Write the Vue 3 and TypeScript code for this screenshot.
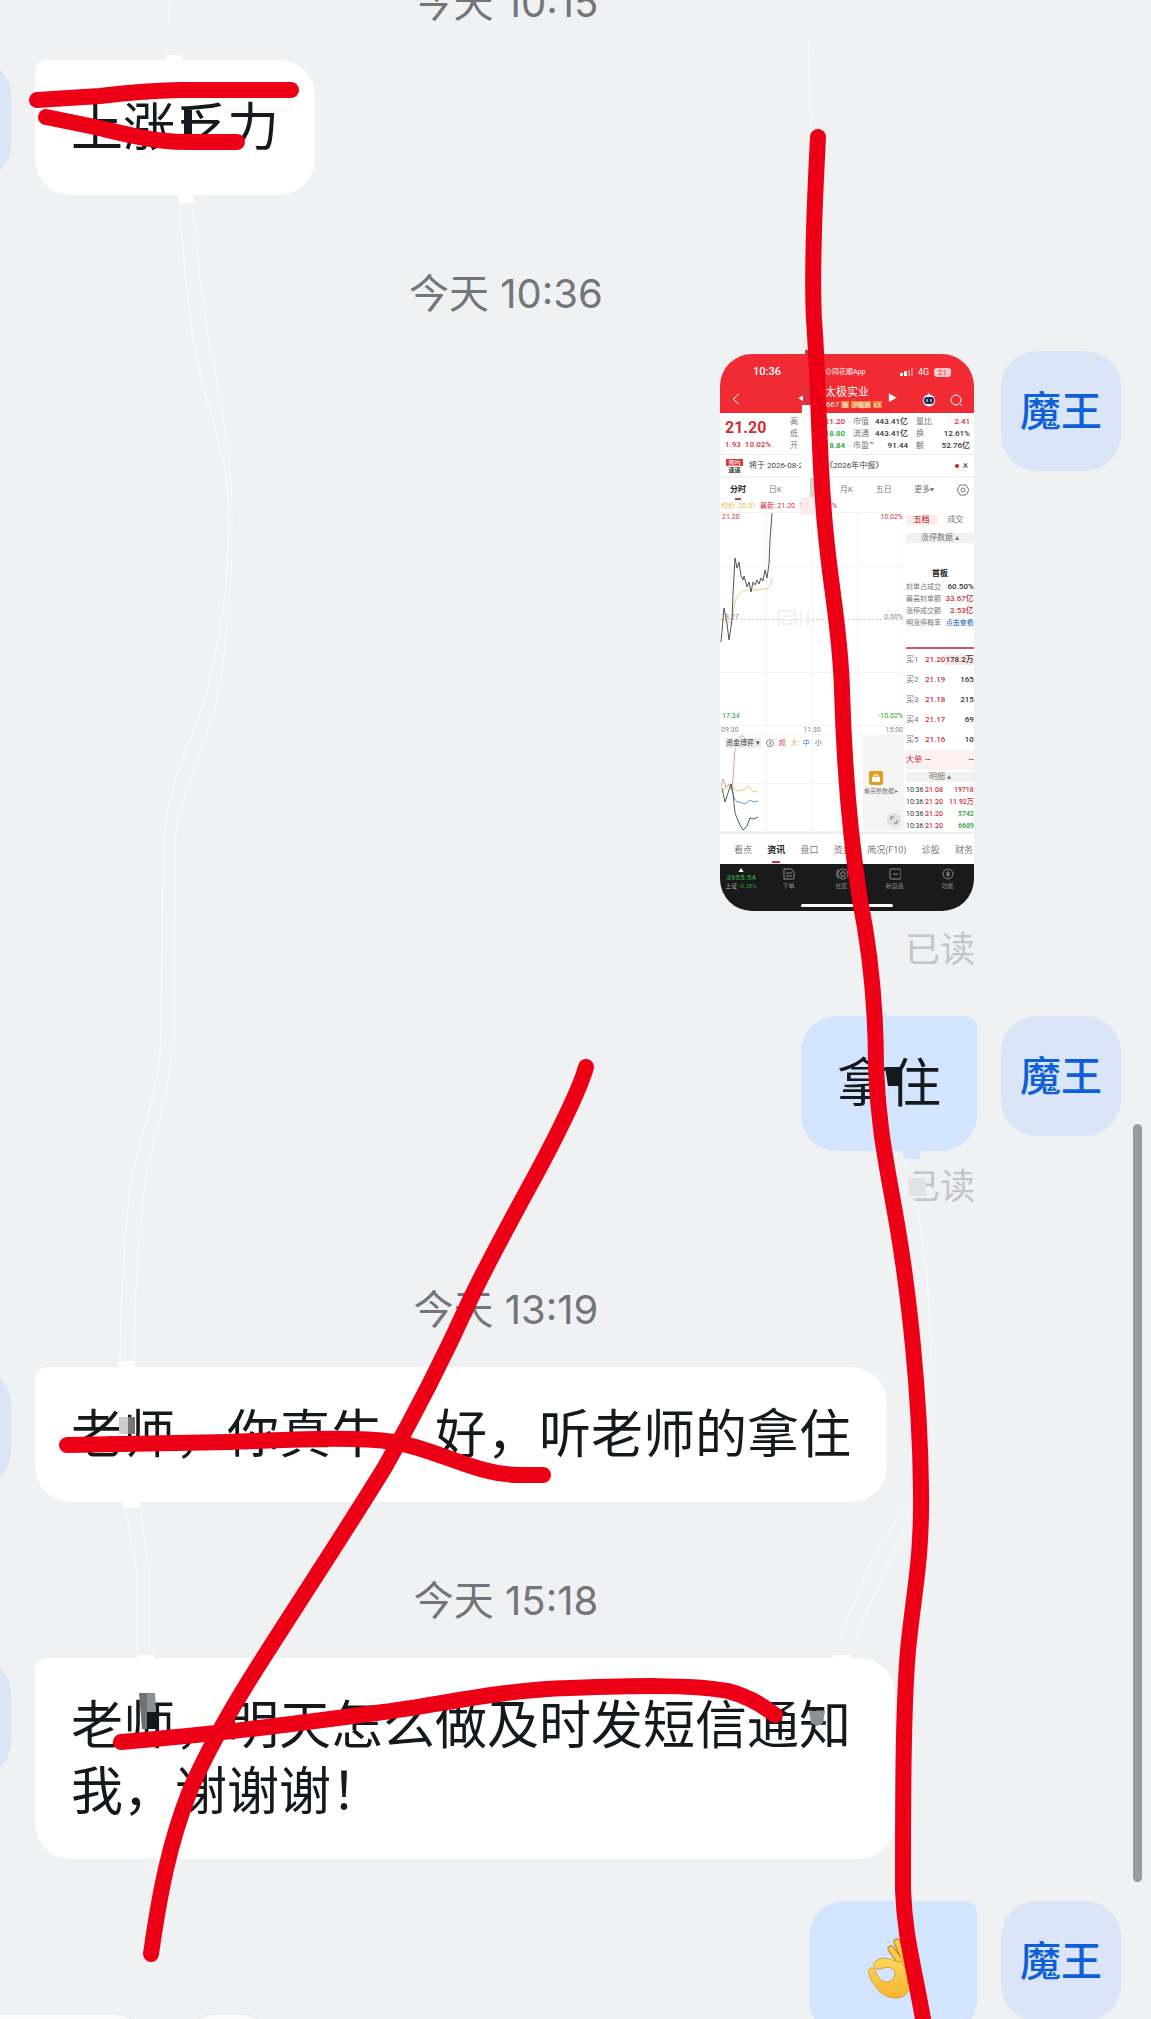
<script setup lang="ts">
interface Message {
  id: number
  time?: string
  mine: boolean
  kind: 'text' | 'photo' | 'emoji'
  text?: string
  read?: boolean
}

const messages: Message[] = [
  { id: 1, time: '今天 10:15', mine: false, kind: 'text', text: '上涨乏力' },
  { id: 2, time: '今天 10:36', mine: true, kind: 'photo', read: true },
  { id: 3, mine: true, kind: 'text', text: '拿住', read: true },
  { id: 4, time: '今天 13:19', mine: false, kind: 'text', text: '老师，你真牛，好，听老师的拿住' },
  { id: 5, time: '今天 15:18', mine: false, kind: 'text', text: '老师，明天怎么做及时发短信通知我，谢谢谢！' },
  { id: 6, mine: true, kind: 'emoji' },
]

const quotes = [
  ['高', '21.20', 'up', '市值', '443.41亿', '量比', '2.41', 'up'],
  ['低', '18.80', 'down', '流通', '443.41亿', '换', '12.61%', ''],
  ['开', '18.84', 'down', '市盈™', '91.44', '额', '52.76亿', ''],
]
const periods = ['分时', '日K', '周K', '月K', '五日', '更多▾']
const limitRows = [
  ['封单占成交', '60.50%', ''],
  ['最高封单额', '33.67亿', 'up'],
  ['涨停成交额', '2.53亿', 'up'],
  ['明涨停概率', '点击查看', 'link'],
]
const bids = [
  ['买1', '21.20', '178.2万'],
  ['买2', '21.19', '165'],
  ['买3', '21.18', '215'],
  ['买4', '21.17', '69'],
  ['买5', '21.16', '10'],
]
const trades = [
  ['10:36', '21.08', '19718', 'up'],
  ['10:36', '21.20', '11.92万', 'up'],
  ['10:36', '21.20', '5742', 'down'],
  ['10:36', '21.20', '6689', 'down'],
]
const sections = ['看点', '资讯', '盘口', '资金', '简况(F10)', '诊股', '财务']
</script>

<template>
  <main class="screen">
    <div class="thread">
      <template v-for="m in messages" :key="m.id">
        <time v-if="m.time" class="time">{{ m.time }}</time>
        <article class="row" :class="{ mine: m.mine }">
          <div class="avatar">{{ m.mine ? '魔王' : '' }}</div>
          <div class="body">
            <p v-if="m.kind === 'text'" class="bubble">{{ m.text }}</p>

            <div v-else-if="m.kind === 'emoji'" class="bubble sticker">
              <svg width="50" height="62" viewBox="0 0 50 62" role="img" aria-label="OK">
                <defs>
                  <linearGradient id="skin" x1="0" y1="0" x2="0" y2="1">
                    <stop offset="0" stop-color="#ffd75e" />
                    <stop offset="1" stop-color="#f5b52e" />
                  </linearGradient>
                </defs>
                <g fill="none" stroke-linecap="round" stroke-linejoin="round">
                  <path d="M23 12 36 30M29 5 39 28M43 6 42 30" stroke="#b97c18" stroke-width="7" />
                  <path d="M23 12 36 30M29 5 39 28M43 6 42 30" stroke="#fccb4b" stroke-width="5" />
                </g>
                <path d="M7 25C12 19 22 21 29 25L36 24L46 26C50 36 44 54 34 60C25 63 14 59 8 50C3 44 0 38 1 33C3 29 7 31 8 35C10 42 16 46 20 45C27 43 29 36 25 32C21 29 16 31 11 32C6 32 4 28 7 25Z" fill="url(#skin)" stroke="#dc9f28" stroke-width="1" />
                <path d="M33 25C39 31 41 39 39 46" fill="none" stroke="#dc9f28" stroke-width="1" />
              </svg>
            </div>

            <section v-else class="photo">
              <header class="head">
                <div class="status">
                  <b>10:36</b>
                  <span class="brand">⊘同花顺App</span>
                  <svg width="14" height="8" viewBox="0 0 14 8" fill="#fff"><path d="M0 5h3v3H0zM4 3h3v5H4z" /><path d="M8 2h2v6H8zM11 0h2v8h-2z" opacity=".4" /></svg>
                  <span class="net">4G</span>
                  <span class="battery">21</span>
                </div>
                <div class="title">
                  <svg class="back" width="8" height="12" viewBox="0 0 8 12" fill="none" stroke="#fff"><path d="M7 1 1 6l6 5" /></svg>
                  <span class="tri">◀</span>
                  <div class="name">
                    <div class="stock">太极实业</div>
                    <div class="code">600667 <i>融</i><i>沪股通</i><i>L1</i></div>
                  </div>
                  <span class="tri next">▶</span>
                  <svg width="14" height="14" viewBox="0 0 14 14"><circle cx="7" cy="7.500" r="6" fill="#fff" /><rect x="2" y="4" width="10" height="7" rx="3" fill="#25245f" /><path d="M5 6v3M9 6v3" stroke="#fff" /><path d="M6 0 8 2" stroke="#fff" /></svg>
                  <svg class="search" width="13" height="13" viewBox="0 0 13 13" fill="none" stroke="#fff"><circle cx="6" cy="6" r="5" /><path d="m10 10 2 2" /></svg>
                </div>
              </header>

              <div class="quote">
                <div class="price"><strong>21.20</strong><span>1.93 &nbsp;10.02%</span></div>
                <div class="grid">
                  <template v-for="q in quotes" :key="q[0]">
                    <span>{{ q[0] }}</span><b :class="q[2]">{{ q[1] }}</b>
                    <span>{{ q[3] }}</span><b>{{ q[4] }}</b>
                    <span>{{ q[5] }}</span><b :class="q[7]">{{ q[6] }}</b>
                  </template>
                </div>
              </div>

              <div class="notice">
                <span class="flash"><em>预约</em><b>速递</b></span>
                <span>将于 2026-08-26 披露《2026年中报》</span>
                <span class="close"><i></i>×</span>
              </div>

              <nav class="periods">
                <span v-for="(p, i) in periods" :key="p" :class="{ on: i === 0 }">{{ p }}</span>
                <svg width="12" height="12" viewBox="0 0 12 12" fill="none" stroke="#777"><path d="M3 1h6l3 5-3 5H3L0 6z" /><circle cx="6" cy="6" r="2" /></svg>
              </nav>

              <div class="market">
                <div class="left">
                  <div class="legend"><span class="avg">均价: 20.01</span><span class="up">最新: 21.20</span><span class="up">1.93 10.02%</span></div>
                  <svg width="184" height="222" viewBox="0 158 184 222" class="plot">
                    <path d="M0 158.500H184M0 212.500H184M0 318.500H184M0 371.500H184M46.500 158V371M92.500 158V371M138.500 158V371M184 158V380" stroke="#f3f3f3" fill="none" />
                    <path d="M0 265.500H184" stroke="#ccc" stroke-dasharray="2 2" />
                    <g fill="none" stroke="#f1f1f1" stroke-width="2"><path d="M59 272V257H75V272M63 262H71M63 266H71V270H63ZM81 257V272M88 257V272M102 258H122M102 265H122M112 258V272" /></g>
                    <path d="M2 268C5 262 8 270 11 268C14 262 13 251 16 245C20 236 26 236 34 236L47 235Q51 233 52 224" fill="none" stroke="#ecc98b" />
                    <path d="M1 288 4 254 7 270 9 286 12 266 13 240 15 204 17 214 19 208 21 222 23 226 24 222 27 233 29 228 31 238 33 228 35 231 37 226 39 230 41 224 43 227 45 216 47 224 49 210 50 186 52 159" fill="none" stroke="#555" />
                    <text x="2" y="165" class="t up">21.20</text><text x="183" y="165" class="t up" text-anchor="end">10.02%</text>
                    <text x="1" y="265" class="t">19.27</text><text x="183" y="265" class="t" text-anchor="end">0.00%</text>
                    <text x="2" y="364" class="t down">17.34</text><text x="183" y="364" class="t down" text-anchor="end">-10.02%</text>
                    <text x="1" y="378" class="t">09:30</text><text x="92" y="378" class="t" text-anchor="middle">11:30</text><text x="183" y="378" class="t" text-anchor="end">15:00</text>
                  </svg>
                  <div class="funds">
                    <svg width="184" height="98" viewBox="0 380 184 98" class="curve">
                      <path d="M0 380.500H143M0 429.500H143M0 477.500H143M46.500 380V477M92.500 380V477" stroke="#f3f3f3" />
                      <g fill="none">
                        <path d="M1 433 3 425 6 433 9 430 12 437 14 410C15 390 17 382 22 382C27 383 28 394 38 393" stroke="#e39aa8" />
                        <path d="M1 438 10 431 17 437 23 436 28 432 32 437 38 438" stroke="#e8d070" />
                        <path d="M11 430 14 444 17 448 20 448 25 450 30 446 34 448 38 447" stroke="#5e9bd0" />
                        <path d="M2 434 5 448 11 430 13 440 15 459 19 469 23 476 27 472 30 464 34 465 38 463" stroke="#4c6650" />
                      </g>
                    </svg>
                    <div class="chips">
                      <span class="pick">资金博弈 ▾</span>
                      <svg width="8" height="8" viewBox="0 0 8 8" fill="none" stroke="#888"><circle cx="4" cy="4" r="3.500" /><path d="M3 3h2v1H4v2" /></svg>
                      <span class="c1">超</span><span class="c2">大</span><span class="c3">中</span><span class="c4">小</span>
                    </div>
                    <div class="locked">
                      <svg width="14" height="14" viewBox="0 0 14 14"><rect width="14" height="14" rx="2" fill="#e49b22" /><path d="M3 6h8v5H3z" fill="#fff" /><path d="M5 6V4h4v2" stroke="#fff" fill="none" /></svg>
                      <span>看完整数据 ▸</span>
                      <svg class="expand" width="14" height="14" viewBox="0 0 14 14"><circle cx="7" cy="7" r="7" fill="#e0e0e0" /><path d="M4 7V4h3M10 7v3H7" stroke="#777" fill="none" /></svg>
                    </div>
                  </div>
                </div>
                <aside class="side">
                  <div class="switch"><b>五档</b><span>成交</span></div>
                  <div class="fold">涨停数据 ▴</div>
                  <div class="board">首板</div>
                  <div v-for="r in limitRows" :key="r[0]" class="pair"><span>{{ r[0] }}</span><b :class="r[2]">{{ r[1] }}</b></div>
                  <div class="bids">
                    <div v-for="(b, i) in bids" :key="b[0]" class="bid"><span>{{ b[0] }}</span><b class="up">{{ b[1] }}</b><b :class="{ hot: i === 0 }">{{ b[2] }}</b></div>
                    <div class="bid big"><span class="up">大单</span><b>--</b><b>--</b></div>
                  </div>
                  <div class="fold detail">明细 ▴</div>
                  <div v-for="t in trades" :key="t[2]" class="trade"><span>{{ t[0] }}</span><b class="up">{{ t[1] }}</b><b :class="t[3]">{{ t[2] }}</b></div>
                </aside>
              </div>

              <nav class="sections"><span v-for="(s, i) in sections" :key="s" :class="{ on: i === 1 }">{{ s }}</span></nav>

              <footer class="dock">
                <div class="tabs">
                  <div class="index"><i>▲</i><b>3955.54</b><span><em>上证</em> -0.28%</span></div>
                  <div><svg width="12" height="12" viewBox="0 0 12 12"><path d="M1 1h7l3 3v7H1zM3 5h6M3 8h6" /></svg>下单</div>
                  <div><svg width="12" height="12" viewBox="0 0 12 12"><circle cx="7" cy="6" r="5" /><path d="M3 1C0 3 0 9 3 11M7 3l1 2 2 .3-1.500 1.500.3 2L7 8l-1.800 1 .3-2L4 5.300 6 5z" /></svg>社区</div>
                  <div><svg width="12" height="12" viewBox="0 0 12 12"><rect x="1" y="1" width="11" height="10" rx="1" /><path d="M4 6h5" /></svg>新自选</div>
                  <div><svg width="12" height="12" viewBox="0 0 12 12"><circle cx="6" cy="6" r="5" /><path d="M5 4h2v4H5zM5 6h2" /></svg>功能</div>
                </div>
                <div class="home"></div>
              </footer>
            </section>

            <small v-if="m.read" class="read">已读</small>
          </div>
        </article>
      </template>
    </div>

    <div class="quick">
      <button type="button" class="wide" aria-label="快捷回复"></button>
      <button type="button" class="round" aria-label="更多"></button>
    </div>
    <div class="scrollbar"></div>

    <svg class="ink" width="1151" height="2019" viewBox="0 0 1151 2019" aria-hidden="true">
      <g fill="#fff">
        <path d="M166 55h16v6h-16zM178 194h15v9h-15zM119 1361h16v8h-16zM123 1502h17v6h-17zM137 1655h17v5h-17zM833 1655h17l-2 5h-16z" />
        <path d="M802 405h14v92h-15v-40h-1v-10h1z" />
      </g>
      <path d="M803 387h10v18h-10zM805 350h8v6h-8z" fill="#d9333f" />
      <path d="M810 478h6v19h-6z" fill="#d5d2d5" />
      <path d="M801 497h15v18h-15z" fill="#fdeaec" />
      <g fill="none" stroke="#fafbfc">
        <path d="M180 203Q184 280 193 340C205 410 229 450 229 515C229 600 216 650 206 695C190 750 166 780 163 850L161 1030C160 1100 136 1140 129 1197Q120 1290 120 1361" />
        <path d="M193 207Q198 280 209 340C220 400 232 450 232 515C232 600 226 650 216 705C200 760 176 800 175 850L174 1030C170 1100 150 1140 143 1197Q134 1290 134 1361" opacity=".6" />
        <path d="M170 0 168 22M808 40 810 90 813 200M125 1508 137 1570V1655M140 1508 149 1570V1655M905 1160C925 1220 933 1300 933 1472M907 1503 872 1560 840 1637M912 1515 885 1570 856 1637M147 1860Q146 1874 154 1874" opacity=".7" />
      </g>
      <path d="M902 1151h18v8h-15zM882 1012h5v6h-5z" fill="#d3e4ff" />
      <path d="M184 110h8v24h-8zM885 1067h17l-1 19h-13zM147 1711h10v18h-10z" fill="#15191c" />
      <path d="M906 1168h8v36h-6z" fill="#eff1f3" />
      <path d="M908 1178h18v18h-17z" fill="#e1e2e4" />
      <path d="M119 1417h9v17h-9z" fill="#cbcccd" />
      <path d="M128 1417h7v17h-7z" fill="#737577" />
      <path d="M139 1693h8v36h-5z" fill="#707173" />
      <path d="M147 1693h8l1 19h-9zM809 1711h16l-2 12-6 3-6-3z" fill="#8e8f91" />
      <g fill="none" stroke="#ed0015" stroke-width="16" stroke-linecap="round" stroke-linejoin="round">
        <path d="M37 100 100 96Q140 91 180 90H291" />
        <path d="M46 117 95 127C125 134 155 142 185 142H237" />
        <path d="M818 137C816 180 811 260 814 320C818 370 819 450 823 500C828 580 840 620 842 690C844 760 849 830 860 900C872 960 876 1010 876 1067C878 1130 888 1170 898 1230C908 1290 920 1390 921 1490C922 1560 914 1590 908 1650C903 1710 903 1800 903 1890C905 1940 914 1965 924 2025" />
        <path d="M586 1067C580 1090 552 1145 534 1178C510 1222 485 1268 470 1300C440 1366 410 1423 385 1467C340 1540 300 1600 262 1660C230 1710 205 1755 189 1793C170 1842 160 1890 151 1954" />
        <path d="M67 1445 230 1442C290 1440 350 1436 394 1442C440 1450 475 1475 520 1475H543" />
        <path d="M121 1742C220 1734 300 1723 383 1712C450 1703 500 1690 570 1688C630 1686 690 1684 728 1691Q754 1698 775 1715" />
      </g>
    </svg>
  </main>
</template>

<style>
body {
  margin: 0;
  background: #eff1f3;
}
</style>

<style scoped>
* {
  box-sizing: border-box;
}
.screen {
  position: relative;
  height: 100vh;
  overflow: hidden;
  background: #eff1f3;
  font-family: "Noto Sans CJK SC", sans-serif;
  color: #15191c;
}
.thread {
  display: flex;
  flex-direction: column;
  margin: -24px 0 0 -139px;
  padding: 0 30px;
}
.time {
  margin: 30px 0;
  line-height: 54px;
  text-align: center;
  font-family: Inter, "Noto Sans CJK SC", sans-serif;
  font-size: 40px;
  color: #727579;
}
.time:first-child {
  margin-top: 0;
}
.row {
  display: flex;
  gap: 24px;
  align-items: flex-start;
  margin-bottom: 42px;
}
.row.mine {
  flex-direction: row-reverse;
}
.avatar {
  flex: none;
  width: 120px;
  height: 120px;
  border-radius: 36px;
  background: #dae6f8;
  color: #0f60d8;
  font-size: 41px;
  font-weight: 500;
  line-height: 114px;
  text-align: center;
}
.body {
  display: flex;
  flex-direction: column;
  align-items: flex-start;
  max-width: 860px;
}
.mine .body {
  align-items: flex-end;
}
.bubble {
  margin: 0;
  padding: 31px 36px 38px;
  border-radius: 12px 36px 36px 36px;
  background: #fff;
  font-size: 52px;
  line-height: 66px;
}
.mine .bubble {
  border-radius: 36px 12px 36px 36px;
  background: #d3e4ff;
}
.sticker {
  display: flex;
  justify-content: center;
  width: 168px;
  height: 135px;
  padding-top: 36px;
}
.read {
  margin: 9px 2px 3px 0;
  font-size: 35px;
  line-height: 48px;
  color: #c3c5c8;
}
.quick {
  position: absolute;
  left: -40px;
  bottom: -66px;
  display: flex;
  gap: 34px;
}
.quick button {
  height: 72px;
  padding: 0;
  border: 1px solid #e6e7e9;
  border-radius: 36px;
  background: #fbfbfc;
}
.wide {
  width: 188px;
}
.round {
  width: 92px;
}
.scrollbar {
  position: absolute;
  top: 1124px;
  right: 9px;
  width: 9px;
  height: 758px;
  border-radius: 5px;
  background: #999b9d;
}
.ink {
  position: absolute;
  top: 0;
  left: 0;
  pointer-events: none;
}

/* shared stock screenshot */
.photo {
  width: 254px;
  margin: 3px;
  border-radius: 32px;
  overflow: hidden;
  background: #fff;
  font-family: Roboto, "Noto Sans CJK SC", sans-serif;
  font-size: 8px;
  line-height: 12px;
  color: #777;
  white-space: nowrap;
}
.photo b {
  font-weight: 500;
  color: #333;
}
.photo i,
.photo em {
  font-style: normal;
}
.photo .up {
  color: #cf3038;
  fill: #cf3038;
}
.photo .down {
  color: #23a032;
  fill: #23a032;
}
.photo .link {
  color: #3a6fd0;
  font-size: 7px;
}
.head {
  height: 59px;
  padding-top: 10px;
  background: #f12b33;
  color: #fff;
}
.status {
  display: flex;
  align-items: center;
  height: 16px;
  padding-left: 33px;
}
.status b {
  width: 72px;
  font-size: 11px;
  color: #fff;
}
.brand {
  width: 75px;
  font-size: 7px;
}
.net {
  width: 16px;
  padding-left: 4px;
  font-size: 9px;
}
.battery {
  width: 17px;
  margin-left: 4px;
  border-radius: 3px;
  background: #fbc9cb;
  color: #f12b33;
  line-height: 9px;
  text-align: center;
}
.title {
  display: flex;
  align-items: center;
  height: 32px;
}
.back {
  margin: 6px 58px 0 12px;
}
.tri {
  width: 8px;
  padding-top: 4px;
  font-size: 6px;
}
.next {
  width: 34px;
  font-size: 9px;
}
.name {
  width: 82px;
  padding-top: 3px;
  text-align: center;
}
.stock {
  font-size: 11px;
  line-height: 14px;
}
.code {
  display: flex;
  gap: 2px;
  justify-content: center;
  line-height: 10px;
}
.code i {
  padding: 0 1px;
  background: #f0883c;
  font-size: 6px;
  line-height: 7px;
  align-self: center;
}
.title .search {
  margin-left: 14px;
}
.title svg {
  position: relative;
  top: 4px;
}
.title .back {
  top: 0;
}
.quote {
  display: flex;
  height: 42px;
  padding: 3px 4px 3px 5px;
  border-bottom: 1px solid #eee;
}
.price {
  width: 65px;
  color: #cf3038;
}
.price strong {
  display: block;
  font-size: 16px;
  font-weight: 700;
  line-height: 23px;
}
.price span {
  font-weight: 500;
}
.grid {
  display: grid;
  flex: 1;
  grid-template-columns: 9px 46px 28px 35px 25px 1fr;
  line-height: 12px;
}
.grid b {
  text-align: right;
}
.grid span:nth-of-type(3n + 2),
.grid span:nth-of-type(3n) {
  padding-left: 8px;
}
.notice {
  display: flex;
  align-items: center;
  height: 21px;
  padding: 0 6px;
  color: #444;
}
.flash {
  width: 23px;
  font-size: 6px;
  line-height: 7px;
}
.flash em,
.flash b {
  display: block;
  width: 17px;
  text-align: center;
}
.flash em {
  background: #dc3a40;
  color: #fff;
}
.flash b {
  font-weight: 700;
}
.close {
  display: flex;
  gap: 4px;
  align-items: center;
  margin-left: auto;
  font-size: 10px;
}
.close i {
  width: 4px;
  height: 4px;
  border-radius: 2px;
  background: #c8202a;
}
.periods {
  display: flex;
  align-items: center;
  justify-content: space-between;
  height: 25px;
  padding: 0 5px 0 10px;
  border-top: 2px solid #f3f3f3;
}
.periods .on,
.sections .on {
  position: relative;
  color: #222;
  font-weight: 700;
}
.periods .on::after,
.sections .on::after {
  content: "";
  position: absolute;
  left: 5px;
  right: 5px;
  bottom: -4px;
  height: 2px;
  background: #c43e44;
}
.market {
  display: flex;
}
.left {
  width: 184px;
}
.legend {
  display: flex;
  gap: 4px;
  height: 11px;
  padding-left: 1px;
  font-size: 7px;
  line-height: 10px;
}
.avg {
  color: #e9b64c;
}
.plot,
.curve {
  display: block;
}
.t {
  fill: #888;
  font-size: 7px;
}
.funds {
  position: relative;
  height: 98px;
}
.chips {
  position: absolute;
  top: 4px;
  left: 5px;
  display: flex;
  gap: 5px;
  align-items: center;
  font-size: 7px;
  line-height: 10px;
}
.pick {
  padding: 0 1px;
  background: #ececec;
  color: #444;
}
.c1 {
  color: #e0566f;
}
.c2 {
  color: #e0b93a;
}
.c3 {
  color: #3c83c4;
}
.c4 {
  color: #3d7a4a;
}
.locked {
  position: absolute;
  top: 1px;
  right: 0;
  display: flex;
  flex-direction: column;
  width: 41px;
  height: 96px;
  padding: 36px 3px 0 6px;
  background: #f5f4f4;
  font-size: 6px;
}
.locked span {
  margin-left: -5px;
}
.expand {
  margin: 16px 0 0 auto;
}
.side {
  flex: 1;
  padding: 14px 2px 0;
  line-height: 12px;
}
.switch {
  display: flex;
  line-height: 10px;
}
.switch b {
  width: 31px;
  background: #fdeceb;
  color: #d0383f;
  text-align: center;
}
.switch span {
  flex: 1;
  text-align: center;
}
.fold {
  height: 10px;
  margin: 8px 0 25px;
  background: #f1f1f1;
  line-height: 10px;
  text-align: center;
}
.board {
  margin-bottom: 1px;
  color: #222;
  font-weight: 700;
  text-align: center;
}
.pair,
.trade {
  display: flex;
  justify-content: space-between;
  height: 12px;
  font-size: 7px;
}
.pair b {
  font-size: 8px;
}
.bids {
  margin-top: 18px;
  padding-top: 1px;
  border-top: 2px solid #cf5a5f;
}
.bid {
  display: flex;
  height: 20px;
  line-height: 20px;
}
.bid span {
  width: 19px;
}
.bid b:last-child {
  flex: 1;
  text-align: right;
}
.bid .hot {
  align-self: center;
  background: #fbe3e3;
  line-height: 10px;
}
.big {
  background: #fdf0f0;
}
.photo .detail {
  margin: 2px 0 2px;
}
.trade span,
.trade .up:nth-child(2) {
  width: 19px;
}
.trade span {
  color: #333;
}
.trade b:last-child {
  flex: 1;
  text-align: right;
}
.trade b {
  font-size: 7px;
}
.sections {
  display: flex;
  justify-content: space-between;
  height: 32px;
  padding: 0 1px 0 14px;
  border-top: 2px solid #eee;
  font-size: 9px;
  line-height: 32px;
}
.sections .on::after {
  bottom: 1px;
}
.dock {
  height: 47px;
  padding-top: 4px;
  background: #1a1a1b;
  color: #8b8b8b;
}
.tabs {
  display: flex;
  height: 36px;
  font-size: 6px;
  line-height: 8px;
}
.tabs div {
  display: flex;
  flex: 1;
  flex-direction: column;
  align-items: center;
  gap: 2px;
}
.tabs svg {
  fill: none;
  stroke: #8b8b8b;
}
.tabs .index {
  gap: 0;
  flex: none;
  width: 42px;
  color: #2e9e38;
}
.index i {
  color: #fff;
  font-size: 5px;
  line-height: 5px;
}
.index b {
  color: #2e9e38;
  font-size: 8px;
  line-height: 9px;
}
.index em {
  color: #aaa;
}
.home {
  width: 92px;
  height: 3px;
  margin: 0 auto;
  border-radius: 2px;
  background: #fff;
}
</style>
